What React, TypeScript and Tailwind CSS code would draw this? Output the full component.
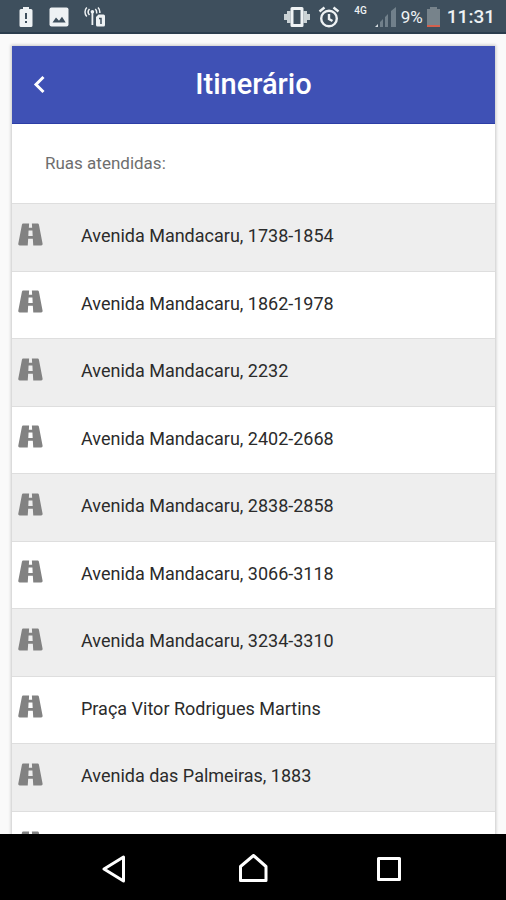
import React from 'react';

const STREETS = [
  'Avenida Mandacaru, 1738-1854',
  'Avenida Mandacaru, 1862-1978',
  'Avenida Mandacaru, 2232',
  'Avenida Mandacaru, 2402-2668',
  'Avenida Mandacaru, 2838-2858',
  'Avenida Mandacaru, 3066-3118',
  'Avenida Mandacaru, 3234-3310',
  'Praça Vitor Rodrigues Martins',
  'Avenida das Palmeiras, 1883',
];

function RoadIcon() {
  return (
    <svg viewBox="0 0 24 24" className="w-[33px] h-[33px] shrink-0 fill-[#828282]" aria-hidden="true">
      <path d="M18.1 4.8C18 4.3 17.6 4 17.1 4H13l.2 3h-2.400L11 4H6.800c-.5 0-.9.4-1 .8l-2.700 14c-.1.6.4 1.200 1 1.200H10l.3-5h3.400l.3 5h5.800c.6 0 1.100-.6 1-1.200l-2.700-14M10.400 13l.2-4h2.800l.2 4h-3.200z" />
    </svg>
  );
}

function StatusBar() {
  return (
    <div className="flex items-center justify-between h-[34px] shrink-0 pl-[18px] pr-[11px] pt-[2px] bg-[#3e4f5d] border-b-2 border-[#2b3d4d] text-[#eef2f4]">
      <div className="flex items-center gap-[15px]">
        <svg viewBox="0 0 16 20" className="w-4 h-5" aria-hidden="true">
          <path d="M5 0h6v2h2a1.500 1.500 0 0 1 1.500 1.500v15A1.500 1.500 0 0 1 13 20H3a1.500 1.500 0 0 1-1.500-1.500v-15A1.500 1.500 0 0 1 3 2h2z" fill="currentColor" />
          <path d="M7 6h2v6H7zM7 14h2v2H7z" fill="#3e4f5d" />
        </svg>
        <svg viewBox="0 0 20 20" className="w-5 h-5" aria-hidden="true">
          <rect x="0.500" y="0.500" width="19" height="19" rx="2" fill="currentColor" />
          <path d="M3.500 15.500l3.500-5 3 3.200 3-4 3.700 5.800z" fill="#3e4f5d" />
        </svg>
        <svg viewBox="0 0 22 20" className="w-[22px] h-5" fill="none" stroke="currentColor" strokeWidth="1.500" aria-hidden="true">
          <path d="M2.800 0.500c-2.400 2.400-2.400 6.600 0 9M5.500 2c-1.600 1.700-1.600 4.300 0 6M14 0.500c1.500 1.500 2 3.500 1.800 5.500M11.300 2c1.300 1.300 1.600 3 1.200 4.500" />
          <circle cx="8.400" cy="4.800" r="1.800" fill="currentColor" stroke="none" />
          <path d="M8.400 5v13" strokeWidth="1.800" />
          <path d="M14.500 7.500h5A1.500 1.500 0 0 1 21 9v9a1.500 1.500 0 0 1-1.500 1.500h-6A1.500 1.500 0 0 1 12 18v-8z" fill="currentColor" stroke="none" />
          <path d="M15 11.500h2v5.500" stroke="#3e4f5d" />
        </svg>
      </div>
      <div className="flex items-center">
        <svg viewBox="0 0 26 20" className="w-[26px] h-5" fill="currentColor" aria-hidden="true">
          <path fillRule="evenodd" d="M8 0h10a1.500 1.500 0 0 1 1.500 1.500v17A1.500 1.500 0 0 1 18 20H8a1.500 1.500 0 0 1-1.500-1.500v-17A1.500 1.500 0 0 1 8 0zM9.500 3v14h7V3z" />
          <path d="M3 4h3.500v12H3zM0 7h3v6H0zM19.500 4H23v12h-3.500zM23 7h3v6h-3z" opacity="0.800" />
        </svg>
        <svg viewBox="0 0 22 22" className="w-[22px] h-[22px] ml-2" fill="none" stroke="currentColor" strokeWidth="2.400" aria-hidden="true">
          <circle cx="11" cy="12.500" r="7.800" />
          <path d="M11 8v5l3.500 2M1.500 5.500l5-4M20.500 5.500l-5-4" />
        </svg>
        <span className="self-start ml-[14px] text-[10px] leading-3 font-medium">4G</span>
        <svg viewBox="0 0 21 20" className="w-[21px] h-5 ml-2" aria-hidden="true">
          <path d="M0 20l3-3v3z" fill="#d8dee2" />
          <path d="M5 15l3-3v8H5zM10 10l3-3v13h-3zM16 4l5-4v20h-5z" fill="#71808b" />
        </svg>
        <span className="ml-[5px] text-[17px] leading-5">9%</span>
        <svg viewBox="0 0 13 20" className="w-[13px] h-5 ml-1" aria-hidden="true">
          <path d="M3 0h7v2h3v16H0V2h3z" fill="#77838b" />
          <path d="M0 18h13v2H0z" fill="#d3604d" />
        </svg>
        <span className="ml-[7px] text-[19px] leading-6 font-medium">11:31</span>
      </div>
    </div>
  );
}

function NavigationBar() {
  return (
    <nav className="flex items-center justify-center gap-[106px] h-[66px] shrink-0 pt-1 bg-black text-white">
      <button type="button" aria-label="Voltar">
        <svg viewBox="0 0 30 30" className="w-[30px] h-[30px]" fill="none" stroke="currentColor" strokeWidth="3" strokeLinejoin="round">
          <path d="M21.500 3v24L2 15z" />
        </svg>
      </button>
      <button type="button" aria-label="Início">
        <svg viewBox="0 0 30 30" className="w-[30px] h-[30px]" fill="none" stroke="currentColor" strokeWidth="3" strokeLinejoin="round">
          <path d="M2.500 26.500v-14L15.500 1.500l12.500 11v14z" />
        </svg>
      </button>
      <button type="button" aria-label="Recentes">
        <svg viewBox="0 0 30 30" className="w-[30px] h-[30px]" fill="none" stroke="currentColor" strokeWidth="3" strokeLinejoin="round">
          <rect x="4.500" y="4.500" width="21" height="21" />
        </svg>
      </button>
    </nav>
  );
}

export default function App() {
  return (
    <div className="flex flex-col h-screen overflow-hidden bg-[#fafafa] font-['Roboto',sans-serif]">
      <StatusBar />
      <main className="flex-1 min-h-0 overflow-hidden pt-3 pl-3 pr-[11px]">
        <section className="bg-white shadow-[0_0_3px_1px_rgba(0,0,0,0.2)]">
          <header className="grid grid-cols-[54px_1fr_54px] items-center h-[78px] pb-[2px] bg-[#3f51b5] border-b border-[#2c3ea6] text-white">
            <button type="button" aria-label="Voltar" className="flex justify-center">
              <svg viewBox="0 0 14 20" className="w-[14px] h-5" fill="none" stroke="currentColor" strokeWidth="3">
                <path d="M11.500 3L4 10.500l7.500 7.500" />
              </svg>
            </button>
            <h1 className="text-center text-[29px] leading-8 font-medium">Itinerário</h1>
          </header>
          <h2 className="flex items-center h-[79px] px-[33px] text-[17px] text-[#6e6e6e]">Ruas atendidas:</h2>
          <ul>
            {STREETS.map(street => (
              <li
                key={street}
                className="flex items-center gap-[34px] odd:h-[68px] even:h-[67px] pl-[2px] pb-1 border-t border-[#dedede] odd:bg-[#eeeeee] text-[18px] text-[#2b2b2b]"
              >
                <div className="pb-[3px]">
                  <RoadIcon />
                </div>
                <span>{street}</span>
              </li>
            ))}
            <li className="flex items-center h-[68px] pl-[2px] pb-1 border-t border-[#dedede]">
              <div className="pb-[3px]">
                <RoadIcon />
              </div>
            </li>
          </ul>
        </section>
      </main>
      <NavigationBar />
    </div>
  );
}
